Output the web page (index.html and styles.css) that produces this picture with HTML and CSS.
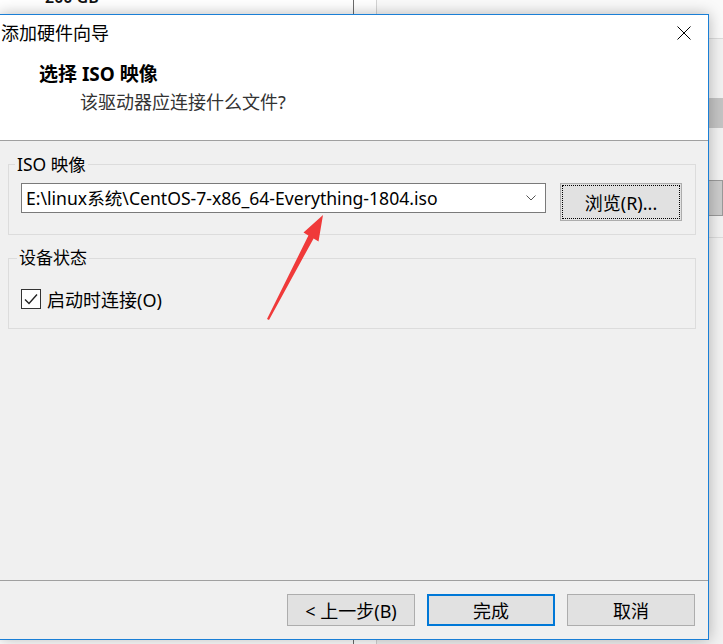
FILE: index.html
```html
<!DOCTYPE html>
<html lang="zh-CN">
<head>
<meta charset="utf-8">
<title>添加硬件向导</title>
<link rel="stylesheet" href="styles.css">
</head>
<body>
<div class="backdrop">
  <div class="col col1"><div class="size">200 GB</div></div>
  <div class="col col2"></div>
  <div class="col col3">
    <div class="c3-head"></div>
    <div class="c3-block1"></div>
    <div class="c3-block2"></div>
    <div class="c3-line"></div>
  </div>
</div>

<div class="dialog">
  <div class="titlebar">
    <span class="title">添加硬件向导</span>
    <svg class="close" viewBox="0 0 14 14" width="14" height="14"><path d="M0.5 0.5 L13.5 13.5 M13.5 0.5 L0.5 13.5" stroke="#000" stroke-width="1" fill="none"/></svg>
  </div>
  <div class="header">
    <div class="heading">选择 ISO 映像</div>
    <div class="subheading">该驱动器应连接什么文件?</div>
  </div>
  <div class="body">
    <fieldset class="group">
      <legend>ISO 映像</legend>
      <div class="iso-row">
        <div class="combo">
          <span class="combo-text">E:\linux系统\CentOS-7-x86_64-Everything-1804.iso</span>
          <svg class="chev" viewBox="0 0 10 6" width="10" height="6"><path d="M0.5 0.5 L5 5 L9.5 0.5" stroke="#555" stroke-width="1" fill="none"/></svg>
        </div>
        <button class="btn browse">浏览(R)...</button>
      </div>
    </fieldset>
    <fieldset class="group group2">
      <legend>设备状态</legend>
      <label class="check">
        <span class="box"><svg viewBox="0 0 18 18" width="18" height="18"><path d="M3 9.5 L7 13.5 L15 4.5" stroke="#222" stroke-width="1.4" fill="none"/></svg></span>
        <span class="check-text">启动时连接(O)</span>
      </label>
    </fieldset>
  </div>
  <div class="footer">
    <button class="btn wide">&lt; 上一步(B)</button>
    <button class="btn wide default">完成</button>
    <button class="btn wide">取消</button>
  </div>
</div>

<svg class="annot" viewBox="0 0 723 644" width="723" height="644">
  <polygon points="267,319 308.4,235.6 303.5,232.5 323,215 318.5,241.5 313.6,238.4 269,320" fill="#f03a3a"/>
</svg>
</body>
</html>
```

FILE: styles.css
```css
* { box-sizing: border-box; }
html, body { margin: 0; padding: 0; }
body {
  width: 723px;
  height: 644px;
  overflow: hidden;
  position: relative;
  background: #f0f0f0;
  font-family: "Noto Sans", "Noto Sans CJK SC", sans-serif;
  font-size: 17px;
  color: #000;
}

/* backdrop application behind the dialog */
.backdrop { display: flex; height: 644px; }
.col { height: 100%; }
.col1 { width: 354px; border-right: 1px solid #6b6b6b; background: #fff; overflow: hidden; }
.col2 { width: 23px; border-right: 1px solid #d4d4d4; background: #fff; }
.col3 { flex: 1; background: #f2f2f2; }
.size {
  margin-top: -11px;
  padding-left: 45px;
  font-size: 16px;
  line-height: 16px;
  font-weight: 600;
  color: #111;
}
.c3-head { height: 39px; background: #fafafa; border-bottom: 1px solid #dcdcdc; }
.c3-block1 { margin-top: 59px; height: 30px; background: #c4c4c4; }
.c3-block2 { margin-top: 52px; height: 36px; background: #cbcbcb; border: 1px solid #9a9a9a; }
.c3-line { margin-top: 21px; height: 1px; background: #dcdcdc; }

/* dialog window */
.dialog {
  position: absolute;
  left: -1px;
  top: 14px;
  width: 710px;
  height: 626px;
  border: 1px solid #1a7fd6;
  background: #f0f0f0;
  display: flex;
  flex-direction: column;
  box-shadow: 0 0 14px rgba(0, 0, 0, 0.28);
}
.titlebar {
  height: 36px;
  background: #fff;
  display: flex;
  align-items: center;
  justify-content: space-between;
}
.title { font-size: 18px; line-height: 36px; padding-left: 1px; }
.close { margin-right: 17px; }

.header {
  height: 90px;
  background: #fff;
  border-bottom: 1px solid #a0a0a0;
  padding: 11px 0 0 39px;
}
.heading { font-size: 19px; line-height: 24px; font-weight: 700; }
.subheading { margin-top: 4px; padding-left: 41px; font-size: 18px; line-height: 24px; color: #333; }

.body { flex: 1; padding: 11px 12px 0 8px; }
.group {
  margin: 0;
  border: 1px solid #dcdcdc;
  padding: 7px 12px 13px 12px;
  min-width: 0;
}
.group legend {
  font-size: 17.5px;
  line-height: 24px;
  padding: 0 2px;
  margin-left: -6px;
}
.group2 { margin-top: 11px; padding-top: 17px; padding-bottom: 17px; }
.group2 legend { margin-left: -4px; font-size: 17px; }

.iso-row { display: flex; align-items: flex-start; }
.combo {
  width: 525px;
  height: 30px;
  border: 1px solid #7a7a7a;
  background: #fff;
  display: flex;
  align-items: center;
  padding: 0 9px 0 4px;
}
.combo-text { flex: 1; white-space: nowrap; font-size: 17.6px; line-height: 28px; }
.chev { flex: none; }

.btn {
  font-family: "Noto Sans", "Noto Sans CJK SC", sans-serif;
  font-size: 18px;
  color: #000;
  background: #e1e1e1;
  border: 1px solid #adadad;
  padding: 0;
  margin: 0;
}
.browse {
  margin-left: 14px;
  width: 122px;
  height: 38px;
  outline: 1px dotted #000;
  outline-offset: -3px;
}

.check { display: flex; align-items: center; height: 24px; }
.check-text { font-size: 18px; }
.box {
  width: 20px;
  height: 20px;
  border: 1px solid #333;
  background: #fff;
  display: flex;
  align-items: center;
  justify-content: center;
  margin-right: 6px;
}

.footer {
  height: 59px;
  border-top: 1px solid #a0a0a0;
  padding: 13px 13px 0 0;
  display: flex;
  justify-content: flex-end;
  gap: 12px;
}
.wide { width: 128px; height: 32px; }
.default { border: 2px solid #0078d7; }

.annot { position: absolute; left: 0; top: 0; pointer-events: none; }
```
